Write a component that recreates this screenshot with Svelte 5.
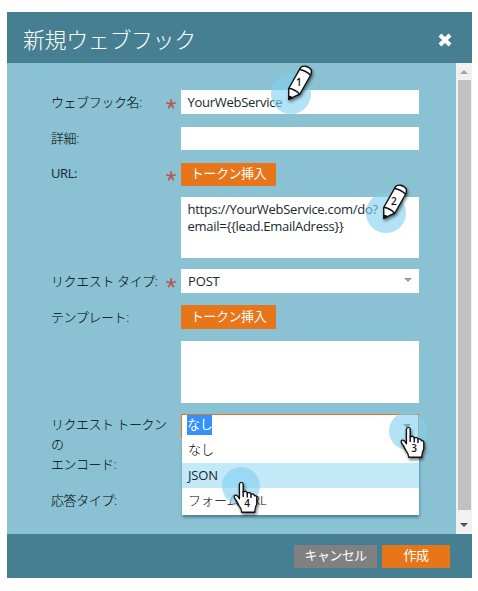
<script>
  const markers = [
    { kind: 'pencil', n: 1, x: 291, y: 94 },
    { kind: 'pencil', n: 2, x: 386, y: 213 },
    { kind: 'hand', n: 3, x: 408, y: 431 },
    { kind: 'hand', n: 4, x: 241, y: 486 },
  ];
</script>

{#snippet star()}
  <svg class="star" width="10" height="10" viewBox="0 0 10 10"><path d="M5 5V.3M5 5 .4 3.7M5 5 9.6 3.7M5 5 2.2 9.2M5 5 7.8 9.2" /></svg>
{/snippet}

<div class="page">
  <div class="dialog">
    <header>
      <h1>新規ウェブフック</h1>
      <svg class="close" width="14" height="14" viewBox="0 0 14 14"><path d="M2 2 12 12M12 2 2 12" /></svg>
    </header>
    <div class="body">
      <div class="form">
        <div class="row r1"><span class="label">ウェブフック名:</span>{@render star()}<div class="field latin">YourWebService</div></div>
        <div class="row r2"><span class="label">詳細:</span><div class="field"></div></div>
        <div class="row r3"><span class="label">URL:</span>{@render star()}<button class="token">トークン挿入</button></div>
        <div class="row r4"><span class="label"></span><div class="field area latin">https://YourWebService.com/do?<br />email=&#123;&#123;lead.EmailAdress&#125;&#125;</div></div>
        <div class="row r5"><span class="label">リクエスト タイプ:</span>{@render star()}<div class="field select">POST<i class="caret"></i></div></div>
        <div class="row r6"><span class="label">テンプレート:</span><button class="token">トークン挿入</button></div>
        <div class="row r7"><span class="label"></span><div class="field area"></div></div>
        <div class="row r8">
          <span class="label multi">リクエスト トークン<br />の<br />エンコード:</span>
          <div class="field combo"><span class="picked">なし</span><i class="caret"></i>
            <div class="menu">
              <div class="opt ja">なし</div>
              <div class="opt on">JSON</div>
              <div class="opt ja">フォーム URL</div>
            </div>
          </div>
        </div>
        <div class="row r9"><span class="label">応答タイプ:</span><div class="field under"></div></div>
      </div>
      <div class="scroll"><i class="up"></i><div class="thumb"></div><i class="down"></i></div>
    </div>
    <footer>
      <button class="cancel">キャンセル</button>
      <button class="create">作成</button>
    </footer>
  </div>

  {#each markers as m}
    <svg class="marker" style="left:{m.x - 30}px;top:{m.y - 35}px" width="60" height="70" viewBox="-30 -35 60 70">
      <circle r={m.kind === 'pencil' ? 20 : 19} />
      {#if m.kind === 'pencil'}
        <g class="ink">
          <path d="M-2.2 5.3-2.3-5.5 9-25.3Q10-28.3 14.5-27.8 19.5-26.5 20.5-23.3L20-19.5 8.9 0Z" />
          <path d="M-2.1-5.8Q4-4.6 8.6-.1M8.6-24.5Q15-23.4 19.6-18.8" fill="none" />
          <path class="tip" d="M-2.2 2.4Q-.2 2.4 1.2 3.7L-2.2 5.4Z" />
        </g>
        <text x="7.8" y="-8.3">{m.n}</text>
      {:else}
        <g class="ink">
          <path d="M-1.6-1.6Q-1.4-3.6.3-3.6T2.2-1.6V6Q5.2 4.2 6.2 7 9.2 5.8 10 8.2 12.8 7.2 13.4 9.7 15.8 9.2 15.8 12V18Q13.9 21 13.7 26.2H.8Q.4 22.3-2.2 19.4L-4.6 14.6Q-8.2 10.4-5.8 9.2-3.8 8.6-1.6 12.8Z" />
          <path d="M2.2 5V11M6.3 6.6V11.4M10 8.2V12" fill="none" />
        </g>
        <text x="6" y="21">{m.n}</text>
      {/if}
    </svg>
  {/each}
</div>

<style>
  :global(body) { background: #fff; }
  .page { position: relative; box-sizing: border-box; width: 478px; height: 591px; padding: 12px 6px 0 7px; overflow: hidden; font: 13px/17px "Open Sans", "Noto Sans CJK JP", sans-serif; color: #17282f; }
  .dialog { display: flex; flex-direction: column; width: 465px; height: 566px; background: #8ac1d3; }
  header { display: flex; align-items: center; justify-content: space-between; height: 51px; padding: 0 20px 0 16px; background: #467f92; }
  h1 { margin: 1px 0 0; font: 300 22px/30px "Noto Sans CJK JP", sans-serif; color: #fff; letter-spacing: -.4px; white-space: nowrap; }
  .close { margin-top: 5px; stroke: #fff; stroke-width: 4; }
  .body { display: flex; flex: 1; min-height: 0; justify-content: space-between; }
  .form { width: 412px; padding-top: 27px; }
  .row { display: flex; align-items: flex-start; height: 24px; padding-left: 44px; }
  .label { width: 115px; padding-top: 4px; white-space: nowrap; font-weight: 300; letter-spacing: -.4px; color: #000; }
  .star { margin: 9px 0 0; stroke: #b95757; stroke-width: 1.8; }
  .field, .token { margin-left: auto; }
  .field { box-sizing: border-box; position: relative; width: 238px; height: 100%; padding: 4px 7px; background: #fff; white-space: nowrap; letter-spacing: -.15px; }
  .latin { padding-left: 6.5px; letter-spacing: -.28px; }
  .token { width: 95px; height: 100%; margin-right: 143px; }
  button { box-sizing: border-box; border: 0; padding: 0 0 3px; background: #e7761b; color: #fff; white-space: nowrap; font: 400 13px/20px "Noto Sans CJK JP", sans-serif; letter-spacing: -.4px; }
  .r2 { margin-top: 13px; height: 23px; }
  .r2 .label { padding-top: 3px; }
  .r3 { margin-top: 13px; height: 23px; }
  .r3 .label { padding-top: 2px; font-weight: 400; color: #17282f; }
  .r3 .star { margin-top: 8px; }
  .r4 { margin-top: 11px; height: 61px; }
  .r5 { margin-top: 11px; }
  .r6 { margin-top: 12px; }
  .r7 { margin-top: 12px; height: 62px; }
  .r8 { margin-top: 11px; }
  .r9 { margin-top: 53px; }
  .r9 .label { padding-top: 1px; }
  .caret { position: absolute; right: 7px; top: 9px; border: 4px solid transparent; border-top: 4px solid #999; border-bottom: 0; }
  .multi { padding-top: 0; line-height: 20px; letter-spacing: -.5px; }
  .combo { z-index: 2; border: 1px solid #e7761b; border-bottom: 0; padding: 0 5px; }
  .combo .caret { border-top-color: #666; }
  .picked { display: inline-block; background: #3390ff; color: #fff; width: 25px; height: 20px; line-height: 18px; }
  .menu { position: absolute; left: 0; top: 23px; width: 237px; height: 77px; background: #fff; box-shadow: 0 3px 3px -1px #4b8293, 1px 2px 2px #4b829388; }
  .opt { height: 25px; padding-left: 6px; line-height: 24px; }
  .on { background: #c3e8f8; }
  .ja { font-weight: 300; line-height: 22px; color: #000; letter-spacing: 0; }
  .on + .ja { line-height: 24px; }
  .under { height: 27px; background: none; }
  .scroll { display: flex; flex-direction: column; align-items: center; box-sizing: border-box; width: 16px; padding-top: 7px; background: #f1f1f1; }
  .thumb { flex: none; width: 13px; height: 430px; margin: 6px 0 13px; background: #c1c1c1; }
  .up { border: 4px solid transparent; border-top: 0; border-bottom-color: #a3a3a3; }
  .down { border: 4px solid transparent; border-bottom: 0; border-top-color: #505050; }
  footer { display: flex; justify-content: flex-end; gap: 5px; height: 33px; padding: 11px 22px 0 0; background: #467f92; }
  footer button { height: 23px; }
  .cancel { width: 83px; }
  footer .cancel { background: #808080; letter-spacing: -.6px; }
  .create { width: 68px; }
  .marker { position: absolute; z-index: 5; overflow: visible; }
  circle { fill: #81d0f0; fill-opacity: .62; }
  .ink { fill: #fff; stroke: #111; stroke-width: 1.4; stroke-linejoin: round; filter: drop-shadow(1px 2px 1.5px #0008); }
  .ink path[fill="none"] { fill: none; }
  .ink .tip { fill: #111; }
  text { font: 600 10px "Open Sans", sans-serif; fill: #111; text-anchor: middle; }
</style>
